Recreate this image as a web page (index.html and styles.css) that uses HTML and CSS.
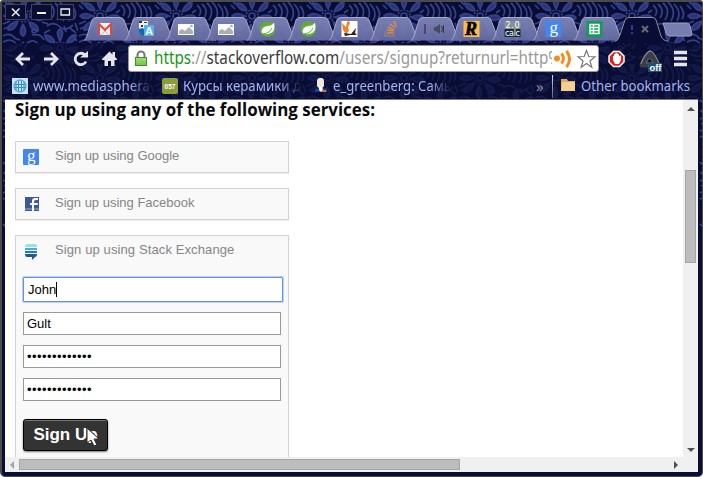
FILE: index.html
```
<!DOCTYPE html>
<html lang="en">
<head>
<meta charset="utf-8">
<title>Sign up</title>
<link rel="stylesheet" href="styles.css">
</head>
<body>
<svg class="defs" width="0" height="0" aria-hidden="true">
  <defs>
    <linearGradient id="tabfill" x2="0" y2="1"><stop stop-color="#7f86b8"/><stop offset="1" stop-color="#676da4"/></linearGradient>
    <linearGradient id="lock" x2="0" y2="1"><stop stop-color="#a8dd7b"/><stop offset="1" stop-color="#6fc24b"/></linearGradient>
    <path id="tabshape" class="shape" d="M0 23.5Q2 22 3 19L8 3Q9 .5 12 .5H36Q39 .5 40 3L46 19Q47 23 50 23.5"/>
    <g id="photo"><path d="M12.500 7h16v11h-16z" fill="#fcfcfc"/><path d="M13.500 17v-3l3-2 3 2 4-4 4 4v3z" fill="#acafb1"/><path d="M25 8h2v2h-2z" fill="#65b6d6"/></g>
    <g id="leaf"><circle cx="20.500" cy="12" r="7.800" fill="#5fae31"/><path d="M27 5.500q1.500 7-2 10q-4 3-10 1q-2-6 5-7.500q5 0 7-3.500z" fill="#fff"/><path d="M15 17q7 0 10-6" stroke="#5fae31" fill="none"/></g>
    <pattern id="floral" width="76" height="62" patternUnits="userSpaceOnUse">
      <g fill="none" stroke="#35408a" stroke-width="1.7">
        <g id="flower">
          <circle cx="22" cy="14" r="3"/><circle cx="22" cy="14" r="6" stroke-dasharray="2 1.4"/>
          <path fill="#2a3478" d="M22 7q-5-9 0-12q5 3 0 12M28 10q4-10 10-9q0 7-10 9M29 15q10-4 13 1q-4 5-13-1M27 20q10 2 9 9q-7 0-9-9M21 22q5 9 0 12q-5-3 0-12M16 19q-3 10-10 9q0-7 10-9M15 14q-9 5-13 0q4-5 13 0M17 9q-10-1-10-8q8 0 10 8"/>
        </g>
        <use href="#flower" x="36" y="32"/>
        <path d="M43 3q6 5 2 11M48 2q7 6 2 14M53 1q8 7 2 17M58 0q9 9 3 19M64 2q8 8 3 17M70 4q6 7 2 13M1 40q10-5 14 4q-5 8-12 3M4 52q9 5 17-1M9 58q8 3 16-3M25 41q8-5 11 2M30 33q9-2 12 5M45 24q7-5 13 1q5 5 13-2"/>
        <path d="M1 3l4 4M3 0l4 3M1 22l7-3M2 27l4-2M12 36l6 2M1 34q7-4 12 2M17 44l5-4M22 47l3-5M20 54l6 1M28 57l4-3M34 1l5-3M42 8l-4 3M40 20l6 2M62 24l2 6M68 26l6 5M73 21l3 8M71 34l4 5M46 59l5 3M70 54l5 6M42 31l6-3"/>
        <path d="M10 44a2 2 0 1 0 .1 0M32 27a2 2 0 1 0 .1 0M74 45a3 3 0 1 0 .1 0"/>
      </g>
    </pattern>
  </defs>
</svg>
<div class="window">
  <svg class="texture" width="701" height="100"><rect width="701" height="41" fill="url(#floral)"/><rect y="41" width="701" height="59" fill="url(#floral)" opacity=".25"/></svg>
  <svg class="texture edge" width="3" height="130"><rect width="5" height="130" fill="url(#floral)"/></svg>
  <svg class="texture edge right" width="3" height="130"><rect width="4" height="130" fill="url(#floral)"/></svg>
  <header class="strip">
    <div class="controls">
      <span><svg width="19" height="14"><path d="M6 3.500l7.500 7.500M13.500 3.500L6 11" stroke="#eceef8" stroke-width="1.500"/></svg></span>
      <span><svg width="19" height="14"><path d="M5 8h9" stroke="#eceef8" stroke-width="2"/></svg></span>
      <span><svg width="15" height="14"><path d="M3 4h8.500v6H3z" fill="none" stroke="#eceef8" stroke-width="1.300"/></svg></span>
    </div>
    <nav class="tabs">
      <svg class="tab" viewBox="0 0 50 24"><use href="#tabshape"/><path d="M14 6h14v12h-14z" fill="#f4eeee"/><path d="M15 18V7l6 6 6-6v11" fill="none" stroke="#dd4b3e" stroke-width="2"/><path d="M17 18l4-4 4 4" fill="none" stroke="#cdb9b9"/></svg>
      <svg class="tab" viewBox="0 0 50 24"><use href="#tabshape"/><path d="M14 4h9v8h-9z" fill="#f3eee0"/><path d="M14 4h3v2h-3zM19 5h3v1h-3zM16 8h2v2h-2zM20 8h1v2h-1z" fill="#30343b"/><path d="M13 12l5-1 5 8-7-1z" fill="#0e69bd"/><path d="M19 8h10v11h-10z" fill="#51b3f1"/><text x="20" y="18" class="fav" font-size="11" fill="#fff">A</text></svg>
      <svg class="tab" viewBox="0 0 50 24"><use href="#tabshape"/><use href="#photo" x="-.5"/></svg>
      <svg class="tab" viewBox="0 0 50 24"><use href="#tabshape"/><use href="#photo" x="-.5"/></svg>
      <svg class="tab" viewBox="0 0 50 24"><use href="#tabshape"/><use href="#leaf"/></svg>
      <svg class="tab" viewBox="0 0 50 24"><use href="#tabshape"/><use href="#leaf"/></svg>
      <svg class="tab" viewBox="0 0 50 24"><use href="#tabshape"/><path d="M12.500 4h16v16h-16z" fill="#fff"/><path d="M13 6l4 4 1-5 2-1 1 2-2 4 1 4-3 3-3-4z" fill="#ef8220"/><path d="M15 16l7 1 5-6-1 5 2 2-7 0-5 1z" fill="#292322"/></svg>
      <svg class="tab" viewBox="0 0 50 24"><use href="#tabshape"/><path d="M15 14v5h9v-5" fill="none" stroke="#858188" stroke-width="1.500"/><path d="M17 16h6M17 13l6 1M18 10l6 3M20 7l5 4M24 4l2 6" stroke="#e58a36" stroke-width="1.400"/></svg>
      <svg class="tab" viewBox="0 0 50 24"><use href="#tabshape"/><path d="M14 7v10" stroke="#44458b" stroke-width="2"/><path d="M15.500 7v9" stroke="#ad6679" stroke-width=".8"/><path d="M23 10h2l4-3v10l-4-3h-2z" fill="#484b59"/><path d="M30.500 9q2 3 0 6M32.500 8v8" fill="none" stroke="#343742"/></svg>
      <svg class="tab" viewBox="0 0 50 24"><use href="#tabshape"/><path d="M12.500 4h16v16h-16z" fill="#ffbe43"/><text x="14" y="18" font-family="Liberation Serif" font-weight="bold" font-style="italic" font-size="18" fill="#000" stroke="#000" stroke-width=".7">R</text></svg>
      <svg class="tab" viewBox="0 0 50 24"><use href="#tabshape"/><path d="M12.500 4h16v8h-16z" fill="#839095"/><path d="M12.500 12h16v8h-16z" fill="#1b2a3b"/><text x="13.500" y="10.500" class="calc" font-size="8" textLength="14">2.0</text><text x="13" y="18.500" class="calc" font-size="8" textLength="15">calc</text></svg>
      <svg class="tab" viewBox="0 0 50 24"><use href="#tabshape"/><path d="M12.500 4h16v16h-16z" fill="#4285f4"/><text x="16.500" y="15.500" class="g">g</text></svg>
      <svg class="tab" viewBox="0 0 50 24"><use href="#tabshape"/><path d="M12.500 4h16v16h-16z" fill="#109d58"/><path d="M16 7.500h9v9h-9zM16 10.500h9M16 13.500h9M19.500 7v9" fill="none" stroke="#fff" stroke-width="1.400"/></svg>
      <svg class="tab active" viewBox="0 0 54 26"><path d="M0 24.500Q3 24 5 18L10 3Q11 .5 14 .5H38Q40 .5 41 3L46 19Q48 24 53 24V26H0z" fill="#090d35"/><path d="M0 24.500Q3 24 5 18L10 3Q11 .5 14 .5H38Q40 .5 41 3L46 19Q48 24 53 24" fill="none" stroke="#8b8d9e"/><path d="M17 8v5M17 15v2" stroke="#3c4db4" stroke-width="1.500"/><path d="M27 9l6 6M33 9l-6 6" stroke="#6a6b78" stroke-width="2"/></svg>
      <svg class="newtab" viewBox="0 0 31 15"><path d="M1 1H25Q27 1 28 4L30 12Q30 14 28 14H8Q5 14 4 11z" fill="#777daf" stroke="#9ba0c6"/></svg>
    </nav>
  </header>

  <div class="toolbar">
    <svg class="navicons" width="120" height="32"><g fill="none" stroke="#e4e4e9" stroke-width="2.800"><path d="M25 16H12M18 10l-6 6 6 6M39 16h13M46 10l6 6-6 6"/><path d="M80 12A5.700 5.700 0 1 0 81 18.500"/></g><path d="M75 14.500h8V8z M97 16l7.500-7.500 3 3V9h2.500v5l2 2v1h-2.500v6h-3.500v-5h-3v5H99.500v-6H97z" fill="#e4e4e9"/></svg>
    <div class="address">
      <svg class="padlock" width="14" height="18"><path d="M3.500 8V5a3.500 3.500 0 0 1 7 0v3" fill="none" stroke="#777" stroke-width="2"/><rect x="1.500" y="7.500" width="11" height="8" fill="url(#lock)" stroke="#48882e"/></svg>
      <svg class="url" width="398" height="24"><text y="17" font-size="17.500" fill="#999" textLength="407" lengthAdjust="spacingAndGlyphs"><tspan fill="#159615">https</tspan>://<tspan fill="#3c3c3c">stackoverflow.com</tspan>/users/signup?returnurl=http%</text></svg>
      <svg width="46" height="24"><circle cx="5" cy="12.500" r="3" fill="#f38b1d"/><path d="M9.500 7.500q4 5 0 10M14.500 5q6 8 0 16" fill="none" stroke="#f38b1d" stroke-width="3"/><path d="M34.500 4.500l2.300 6 6.200.2-5 4.300 1.800 6.200-5.300-3.600-5.300 3.600 1.800-6.200-5-4.300 6.200-.2z" fill="#fff" stroke="#777" stroke-width="1.200"/></svg>
    </div>
    <svg class="extras" width="92" height="32"><path d="M8.500 8.500h6l4.500 4.500v6l-4.500 4.500h-6L4 19v-6z" fill="#df2020" stroke="#fff" stroke-width="1.500"/><path d="M8 17v-4h1v-2h1.500v-1h2v1h1.500v2h1l1-1v5l-2 4h-4z" fill="#fff"/><path d="M37 22l8-12 7 12z" fill="#090d30" stroke="#3b3e46" stroke-width="5" stroke-linejoin="round"/><path d="M36 21q1-5 6-11 4-4 7 1 4 6 5 10" fill="none" stroke="#868a90" stroke-width="1.200"/><path d="M41 20q4-9 7 0z" fill="none" stroke="#686c74"/><rect x="43" y="20" width="14" height="9" fill="#1e536f"/><text x="44.500" y="28" font-size="9" font-weight="bold" fill="#fff" textLength="12" lengthAdjust="spacingAndGlyphs">off</text><path d="M69 9.500h13M69 15.500h13M69 21.500h13" stroke="#e5e5e9" stroke-width="3.500"/></svg>
  </div>

  <div class="bookmarks">
    <svg class="ico" viewBox="0 0 16 16"><path d="M0 0h16v16h-16z" fill="#c5e2f4"/><path d="M6.500 3v10M9.500 3v10M2 6.500h12M2 9.500h12M4 3v10M12 3v10" stroke="#338fce" fill="none"/><circle cx="8" cy="8" r="6" fill="none" stroke="#338fce"/></svg>
    <svg class="label fade" width="119" height="24"><text y="16" textLength="117" lengthAdjust="spacingAndGlyphs">www.mediasphera</text></svg>
    <svg class="ico b2" viewBox="0 0 16 16"><rect width="16" height="16" rx="2" fill="#8a9d38"/><text x="2.500" y="11" class="fav" font-size="8" fill="#fff" textLength="11" lengthAdjust="spacingAndGlyphs">057</text></svg>
    <svg class="label fade" width="118" height="24"><text y="16" textLength="118" lengthAdjust="spacingAndGlyphs">Курсы керамики д</text></svg>
    <svg class="ico b3" viewBox="0 0 16 16"><rect x="5" y="0" width="7" height="10" rx="3" fill="#f1e8d8"/><path d="M3 14v-3l4-1h4l4 1v3z" fill="#143f9b"/><path d="M7 9h3l1 3-2 2-2-2z" fill="#fff"/><path d="M10 12h4v2h-4z" fill="#e86b2b"/></svg>
    <svg class="label fade" width="118" height="24"><text y="16" textLength="118" lengthAdjust="spacingAndGlyphs">e_greenberg: Самь</text></svg>
    <span class="more">»</span><span class="divider"></span>
    <svg class="ico folder" viewBox="0 0 16 16"><path d="M1 1h6l1 2h7v10H1z" fill="#e3a957"/><path d="M2 4h13v9H1z" fill="#f5cf8f"/></svg>
    <svg class="label" width="111" height="24"><text y="16" textLength="109" lengthAdjust="spacingAndGlyphs">Other bookmarks</text></svg>
  </div>

  <div class="view">
    <main class="page">
      <svg class="heading" role="heading" aria-level="2" width="370" height="24"><text y="16" textLength="360" lengthAdjust="spacingAndGlyphs">Sign up using any of the following services:</text></svg>
      <section class="card"><svg class="service" viewBox="0 0 16 16"><rect width="16" height="16" rx="1" fill="#4285f4"/><text x="4" y="11.500" class="g">g</text></svg><span>Sign up using Google</span></section>
      <section class="card"><svg class="service" viewBox="0 0 16 16"><path d="M2 1h14v14H2z" fill="#3b5998"/><path d="M2 12h14v2H2z" fill="#6d84b4"/><path d="M9 15V9H7V7h2V5q0-3 3-3h3v2h-2q-2 0-2 2v1h4l-.5 2H11v6z" fill="#fff"/></svg><span>Sign up using Facebook</span></section>
      <section class="card form">
        <div class="row"><svg class="service" viewBox="0 0 16 16"><path d="M2 3q0-2 2-2h8q2 0 2 2v1H2z" fill="#9ce0ea"/><path d="M2 5h12v2H2z" fill="#41aced"/><path d="M2 8h12v2H2z" fill="#1f78d2"/><path d="M2 11h12q0 3-2 3l-3 3v-3H4q-2 0-2-3z" fill="#265698"/></svg><span>Sign up using Stack Exchange</span></div>
        <div class="field focused">John<span class="caret"></span></div>
        <div class="field">Gult</div>
        <div class="field secret">•••••••••••••</div>
        <div class="field secret">•••••••••••••</div>
        <button>Sign Up<svg class="pointer" width="16" height="22"><path d="M2 1v15l4-3 3 6 3-1-3-6h5z" fill="#fff" stroke="#24272a"/></svg></button>
      </section>
    </main>
    <aside class="vertical"><i class="up"></i><b></b><i class="down"></i></aside>
  </div>
  <footer class="horizontal"><i class="left"></i><b></b><i class="rightarrow"></i></footer>
</div>
</body>
</html>
```
FILE: styles.css
```
* { box-sizing: border-box; }
body { margin: 0; background: #fff; overflow: hidden; font: 13px "Liberation Sans", sans-serif; }
svg { display: block; flex: none; }
.defs { position: absolute; }
.window { position: relative; width: 703px; height: 477px; background: #090d34; border: solid #4b4b4b; border-width: 2px 1px 1px 2px; border-radius: 3px 3px 5px 5px; padding: 0 4px 4px 3px; overflow: hidden; }
.texture { position: absolute; left: 0; top: 0; }
.edge { top: 95px; width: 3px; }
.edge.right { left: auto; right: 0; }
.strip { position: relative; height: 39px; display: flex; }
.controls { display: flex; gap: 5px; margin-top: 2px; width: 79px; }
.controls span { width: 21px; height: 16px; border: 1px solid #3d4262; background: #0a0e31; }
.controls span:last-child { width: 17px; }
.tabs { display: flex; margin-top: 15px; }
.tab { width: 50px; height: 24px; margin-right: -9.2px; overflow: visible; }
.shape { fill: url(#tabfill); fill-opacity: .94; stroke: #a4a8ca; stroke-width: 1; }
.active { width: 54px; height: 26px; margin-right: -7px; }
.newtab { width: 31px; height: 15px; margin-top: 5px; }
.fav { font-family: "Liberation Sans", sans-serif; font-weight: bold; }
.calc { font-family: "DejaVu Sans", sans-serif; fill: #fff; }
.g { font-family: "Liberation Serif", serif; font-size: 17px; fill: #fff; }
.toolbar { position: relative; height: 34px; display: flex; }
.navicons { margin-top: 2px; width: 123px; }
.address { width: 471px; height: 27px; margin-top: 4px; background: #fff; border: 1px solid #9695a0; border-radius: 3px; display: flex; }
.padlock { margin: 4px 0 0 5px; }
.url { margin: 1px 0 0 6px; overflow: hidden; font-family: "Noto Sans", sans-serif; }
.extras { margin: 2px 0 0 6px; font-family: "Liberation Sans", sans-serif; }
.bookmarks { position: relative; height: 25px; display: flex; color: #a7b2f1; border-bottom: 1px solid #777887; }
.ico { width: 16px; height: 16px; margin: 3px 5px 0 7px; }
.label { font-family: "Noto Sans", sans-serif; fill: #a7b3f0; }
.label text { font-size: 14.5px; }
.fade { -webkit-mask-image: linear-gradient(90deg,#000 82%,transparent); mask-image: linear-gradient(90deg,#000 82%,transparent); }
.ico.b2 { margin-left: 10px; margin-right: 5px; }
.ico.b3 { margin-left: 11px; margin-right: 5px; }
.more { margin: 4px 0 0 85px; color: #888b9c; font: 15px "Noto Sans", sans-serif; line-height: 15px; width: 13px; }
.divider { height: 23px; width: 1px; margin-left: 3px; background: linear-gradient(#d9d9e2,#595d7b); }
.ico.folder { margin-left: 7px; margin-right: 5px; }
.view { height: 357px; display: flex; position: relative; }
.page { width: 678px; height: 357px; background: #fff; padding-left: 10px; overflow: hidden; }
.heading { height: 24px; font: bold 17.5px "Open Sans", sans-serif; }
.heading text { fill: #0a0a0a; }
.card { width: 274px; height: 32px; border: 1px solid #d2d2d2; background: #f9f9f9; display: flex; color: #858585; box-shadow: 0 1px 1px #eee; }
.heading + .card { margin-top: 17px; }
.card + .card { margin-top: 15px; }
.service { width: 16px; height: 16px; margin: 7px 16px 0 7px; overflow: visible; }
.card span { line-height: 28px; }
.form { height: 260px; flex-direction: column; }
.row { display: flex; height: 43px; }
.row span { letter-spacing: .11px; }
.field { width: 258px; height: 23px; margin: 0 0 10px 7px; border: 1px solid #999; background: #fff; color: #000; padding: 0 3px; line-height: 21px; }
.focused { width: 260px; height: 25px; margin: -2px 0 10px 7px; border: 1px solid #6592dd; border-radius: 1px; box-shadow: 0 0 0 1px #bcd1f4; padding: 0 4px; line-height: 24px; display: flex; align-items: center; }
.caret { width: 1px; height: 15px; background: #000; }
.secret { letter-spacing: .45px; }
button { position: relative; width: 85px; height: 32px; margin: 8px 0 0 7px; padding: 0 0 1px; border: 1px solid #000; border-radius: 3px; color: #fff; background: #333; font: bold 17px "Liberation Sans", sans-serif; box-shadow: 0 1px 2px #777, inset 0 1px #777; }
.pointer { position: absolute; left: 61px; top: 7px; }
.vertical { width: 15px; height: 357px; background: #f0f0f0; display: flex; flex-direction: column; align-items: center; }
.vertical b { width: 11px; height: 93px; margin-top: 59px; border: 1px solid #a6a6a6; background: #bdbdbd; margin-right: 1px; }
i { width: 0; height: 0; border: 4px solid transparent; }
.up { border-top: 0; border-bottom-color: #505050; margin-top: 7px; }
.down { border-bottom: 0; border-top-color: #505050; margin-top: 185px; }
.horizontal { position: relative; height: 15px; width: 693px; background: #f0f0f0; display: flex; align-items: center; }
.left { border-left: 0; border-right-color: #a3a3a3; margin-left: 5px; }
.horizontal b { width: 441px; height: 11px; background: #bdbdbd; border: 1px solid #a6a6a6; margin-left: 5px; }
.rightarrow { border-right: 0; border-left-color: #505050; margin-left: 214px; }
```
